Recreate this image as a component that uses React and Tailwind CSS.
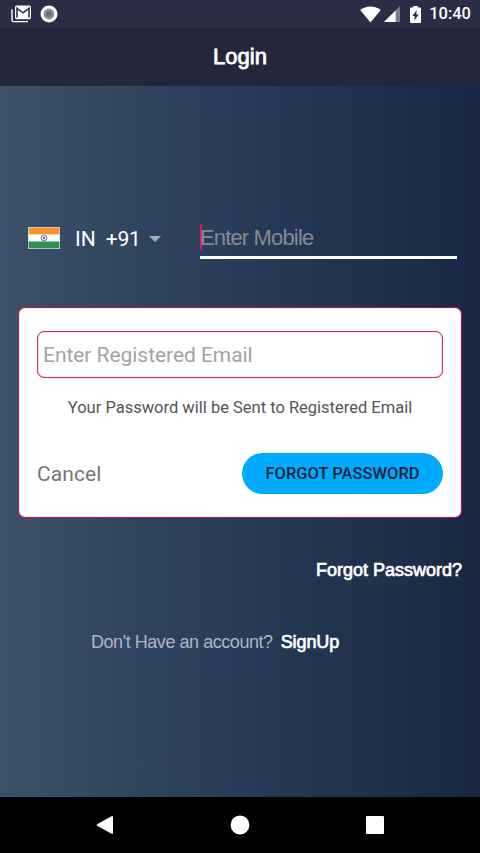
import React from 'react';

const StatusBar = () => (
    <div className="flex h-7 items-center justify-between bg-[#2a2d43] pl-[11px] pr-[9px]">
        <div className="flex items-center gap-[9px]">
            <svg width="20" height="18" viewBox="0 0 20 18" fill="none">
                <path d="M1 4.2V15a1.6 1.6 0 0 0 1.6 1.6H17" stroke="#fff" strokeWidth="1.4" />
                <rect x="4" y="0.6" width="16" height="13.6" rx="1.6" fill="#fff" />
                <path d="M6 12.4V3.4L12 7.8l6-4.4v9" stroke="#2a2d43" strokeWidth="1.6" />
            </svg>
            <svg width="18" height="18" viewBox="0 0 18 18">
                <circle cx="9" cy="9" r="8.5" fill="#fff" />
                <circle cx="9" cy="9" r="5.4" fill="#8d8f99" />
                <circle cx="9" cy="9" r="2.8" fill="#6c6e7a" />
            </svg>
        </div>
        <div className="flex items-center">
            <svg width="21" height="17" viewBox="0 0 21 17">
                <path d="M10.5 16.6L0.2 4.1C2.9 1.7 6.5 0.4 10.5 0.4s7.6 1.3 10.3 3.7z" fill="#fff" />
            </svg>
            <svg className="ml-[3px]" width="16" height="16" viewBox="0 0 16 16">
                <path d="M0 16L16 0v16z" fill="#7b7d8b" />
                <path d="M0 16L11.6 4.4V16z" fill="#fff" />
            </svg>
            <svg className="ml-2.5" width="11" height="17" viewBox="0 0 11 17">
                <path d="M3.2 0h4.6v1.6H10a1 1 0 0 1 1 1V16a1 1 0 0 1-1 1H1a1 1 0 0 1-1-1V2.6a1 1 0 0 1 1-1h2.2z" fill="#fff" />
                <path d="M6.8 3.9L2.4 9.9h2.4L4.2 14.6 8.8 8.6H6.2z" fill="#2a2d43" />
            </svg>
            <span className="ml-2 text-[16.5px] leading-7 font-medium text-white">10:40</span>
        </div>
    </div>
);

const Flag = () => (
    <svg className="-mt-0.5" width="32" height="22" viewBox="0 0 32 22">
        <rect width="32" height="22" fill="#d8dde0" />
        <rect x="0.7" y="0.7" width="30.6" height="6.8" fill="#f7932a" />
        <rect x="0.7" y="7.5" width="30.6" height="7" fill="#fff" />
        <rect x="0.7" y="14.5" width="30.6" height="6.8" fill="#2f8f55" />
        <circle cx="16" cy="11" r="3" fill="none" stroke="#5d6796" strokeWidth="0.8" />
        <path d="M13 11h6M16 8v6M13.9 8.9l4.2 4.2M18.1 8.9l-4.2 4.2" stroke="#8b93b5" strokeWidth="0.5" />
        <circle cx="16" cy="11" r="1" fill="#4a568c" />
    </svg>
);

const PhoneRow = () => (
    <div className="flex h-9 pl-2.5 pr-[5px]">
        <div className="flex h-8 w-[172px] items-center text-[21px] text-white">
            <Flag />
            <span className="ml-[15px] pt-0.5">IN</span>
            <span className="ml-2.5 pt-0.5 tracking-[-0.2px]">+91</span>
            <svg className="ml-2" width="12" height="6" viewBox="0 0 12 6">
                <path d="M0 0h12L6 6z" fill="#a5aeba" />
            </svg>
        </div>
        <div className="flex flex-1 items-start border-b-[3px] border-white">
            <span className="mt-px h-[26px] w-0.5 bg-[#d81b60]" />
            <span className="-ml-0.5 font-['Liberation_Sans',sans-serif] text-[22px] leading-[30px] tracking-[-0.85px] text-[#858a96]">Enter Mobile</span>
        </div>
    </div>
);

const ForgotCard = () => (
    <div className="mt-12 flex h-[211px] flex-col rounded-[7px] border border-[#b5164f] bg-white px-[18px] pt-[23px] inset-shadow-[0_0_1px_#c2185b]">
        <div className="flex h-[47px] items-center rounded-[7px] border border-[#c42a5c] pt-0.5 pl-[5px] text-[21px] tracking-[-0.05px] text-[#a3a3a3] inset-shadow-[0_0_1px_#c2185b]">
            Enter Registered Email
        </div>
        <p className="mt-[18px] text-center text-[16.5px] leading-6 whitespace-nowrap text-[#555]">Your Password will be Sent to Registered Email</p>
        <div className="mt-[33px] flex h-[41px] items-center justify-between">
            <button className="pt-0.5 text-[21px] tracking-[0.1px] text-[#757575]">Cancel</button>
            <button className="h-[41px] w-[201px] rounded-full bg-[#00aaff] pt-0.5 text-[16.5px] font-medium text-[#16243a]">FORGOT PASSWORD</button>
        </div>
    </div>
);

const NavBar = () => (
    <div className="flex h-14 items-center justify-center bg-black">
        <div className="flex w-[135px] justify-center">
            <svg width="18" height="20" viewBox="0 0 18 20">
                <path d="M1.6 10L16 2v16z" fill="#fff" stroke="#fff" strokeWidth="2" strokeLinejoin="round" />
            </svg>
        </div>
        <div className="flex w-[135px] justify-center">
            <svg width="20" height="20" viewBox="0 0 20 20">
                <circle cx="10" cy="10" r="9.4" fill="#fff" />
            </svg>
        </div>
        <div className="flex w-[135px] justify-center">
            <span className="size-[18px] rounded-[1px] bg-white" />
        </div>
    </div>
);

export default function App() {
    return (
        <div className="flex h-[853px] w-[480px] flex-col overflow-hidden font-[Roboto,sans-serif]">
            <StatusBar />
            <header className="flex h-[58px] items-center justify-center bg-[#24273b] pb-0.5">
                <h1 className="font-['Liberation_Sans',sans-serif] text-[22px] text-white [-webkit-text-stroke:0.8px_white]">Login</h1>
            </header>
            <main className="flex flex-1 flex-col bg-linear-to-r from-[#3d5168] via-[#293b58] to-[#192744] px-[18px] pt-[137px]">
                <PhoneRow />
                <ForgotCard />
                <div className="mt-[39px] text-right font-['Liberation_Sans',sans-serif] text-[18px] leading-[26px] text-white [-webkit-text-stroke:0.7px_white]">Forgot Password?</div>
                <div className="mt-[46px] ml-[73px] flex gap-2 font-['Liberation_Sans',sans-serif] text-[18px] leading-[26px]">
                    <span className="tracking-[-0.45px] text-[#aeb6c3]">Don't Have an account?</span>
                    <span className="tracking-[-0.1px] text-white [-webkit-text-stroke:0.7px_white]">SignUp</span>
                </div>
            </main>
            <NavBar />
        </div>
    );
}
